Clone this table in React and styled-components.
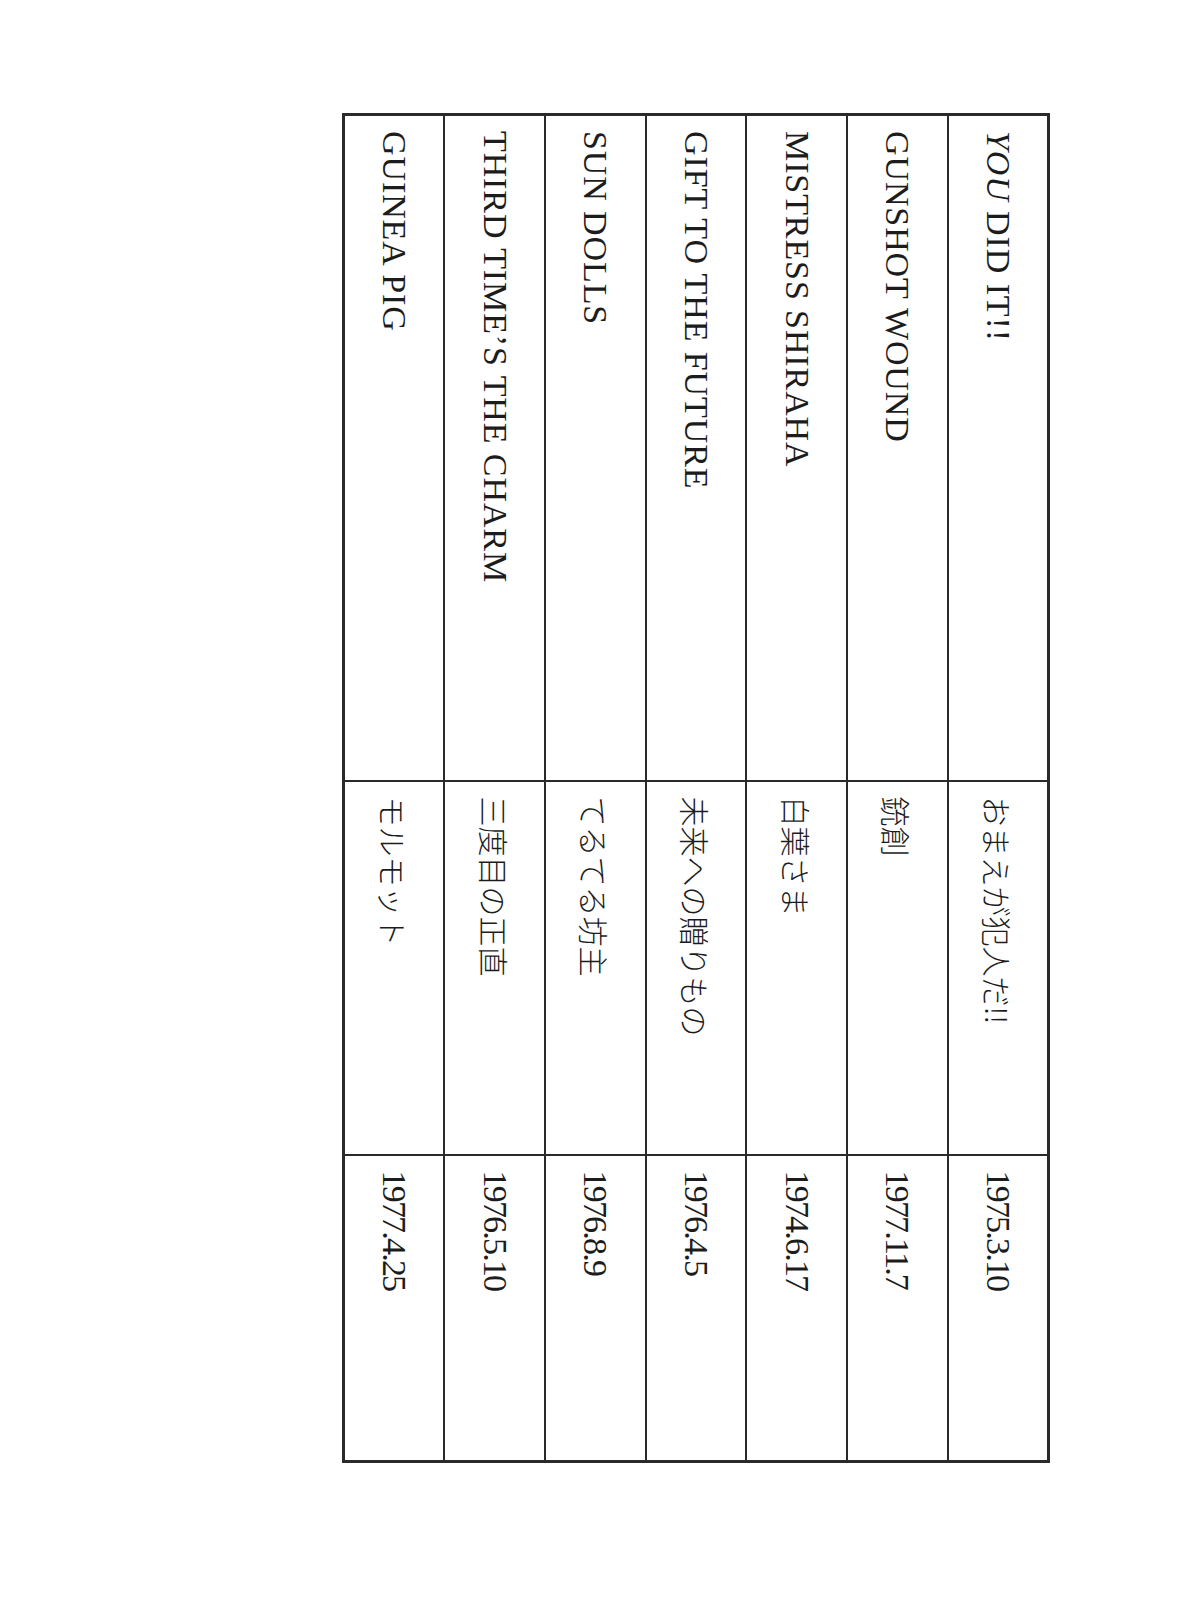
import * as React from 'react'
import styled, { createGlobalStyle } from 'styled-components'

const GlobalStyle = createGlobalStyle`
  html, body {
    margin: 0;
    padding: 0;
    background: #ffffff;
  }
`

const TABLE_W = 1347
const TABLE_H = 705

const Page = styled.div`
  width: 1200px;
  min-height: 1600px;
  padding: 113px 0 0 345px;
  box-sizing: border-box;
  background: #ffffff;
`

// the sheet is printed sideways: the table is drawn upright, then turned
const Sheet = styled.div`
  width: ${TABLE_H}px;
  height: ${TABLE_W}px;
`

const Turned = styled.div`
  width: ${TABLE_W}px;
  height: ${TABLE_H}px;
  transform-origin: top left;
  transform: translateX(${TABLE_H}px) rotate(90deg);
`

const Table = styled.table`
  width: ${TABLE_W}px;
  height: ${TABLE_H}px;
  border-collapse: collapse;
  table-layout: fixed;
  border: 3px solid #2a2a2a;
  color: #1c1c1c;
`

const Row = styled.tr`
  height: ${TABLE_H / 7}px;
`

const spacing = p => (p.$date ? '-1.8px' : p.$jp ? '0' : '0.9px')

const Cell = styled.td`
  border: 2px solid #2a2a2a;
  padding: 0 15px;
  vertical-align: middle;
  white-space: nowrap;
  font-family: ${p => (p.$jp ? '"Noto Sans CJK JP", sans-serif' : '"Liberation Serif", "Noto Sans CJK JP", serif')};
  font-size: ${p => (p.$jp ? '30px' : '34px')};
  font-weight: ${p => (p.$jp ? 300 : 400)};
  letter-spacing: ${spacing};
`

const Em = styled.i`
  font-style: italic;
`

const rows = [
  { en: <><Em>YOU</Em> DID IT!!</>, jp: 'おまえが犯人だ!!', date: '1975.3.10' },
  { en: 'GUNSHOT WOUND', jp: '銃創', date: '1977.11.7' },
  { en: 'MISTRESS SHIRAHA', jp: '白葉さま', date: '1974.6.17' },
  { en: 'GIFT TO THE FUTURE', jp: '未来への贈りもの', date: '1976.4.5' },
  { en: 'SUN DOLLS', jp: 'てるてる坊主', date: '1976.8.9' },
  { en: 'THIRD TIME\u2019S THE CHARM', jp: '三度目の正直', date: '1976.5.10' },
  { en: 'GUINEA PIG', jp: 'モルモット', date: '1977.4.25' }
]

const App = () => {
  return (
    <Page>
      <GlobalStyle />
      <Sheet>
        <Turned>
          <Table>
            <colgroup>
              <col style={{ width: 666 }} />
              <col style={{ width: 374 }} />
              <col style={{ width: 307 }} />
            </colgroup>
            <tbody>
              {rows.map((r, i) => (
                <Row key={i}>
                  <Cell>{r.en}</Cell>
                  <Cell $jp>{r.jp}</Cell>
                  <Cell $date>{r.date}</Cell>
                </Row>
              ))}
            </tbody>
          </Table>
        </Turned>
      </Sheet>
    </Page>
  )
}

export default App
